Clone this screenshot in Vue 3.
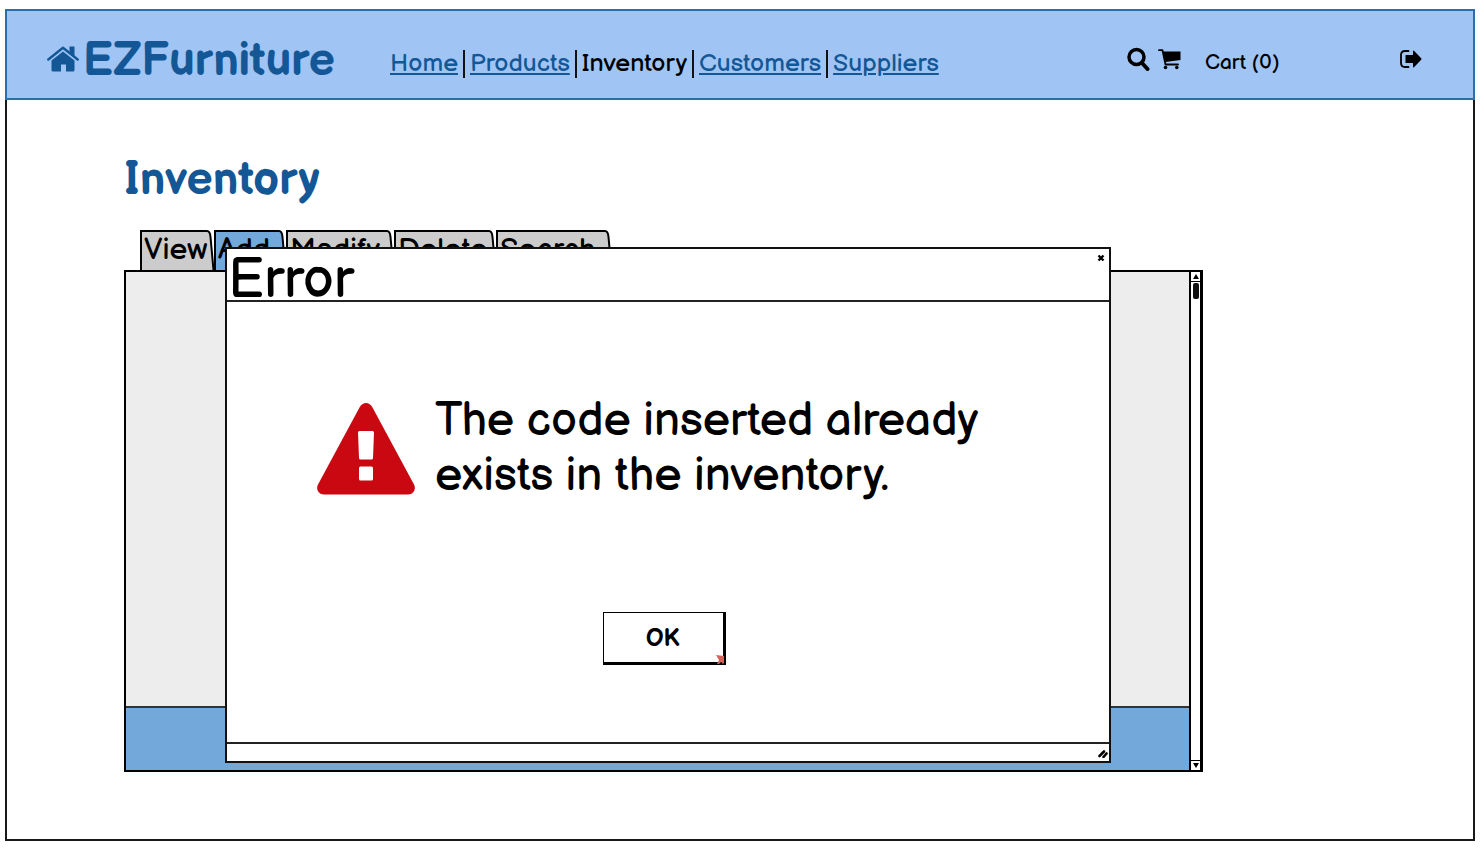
<script setup>
import { ref } from 'vue'

const links = [
  { label: 'Home', href: '#home' },
  { label: 'Products', href: '#products' },
  { label: 'Inventory', current: true },
  { label: 'Customers', href: '#customers' },
  { label: 'Suppliers', href: '#suppliers' },
]
const tabs = ['View', 'Add', 'Modify', 'Delete', 'Search']
const active = ref('Add')
const open = ref(true)
</script>

<template>
  <div class="frame">
    <header class="top">
      <a class="brand" href="#home">
        <svg class="house" viewBox="0 0 32 26" aria-hidden="true">
          <path d="M1.300 13.500 16 1.800l14.700 11.700" fill="none" stroke="currentColor" stroke-width="2.400" stroke-linecap="round" stroke-linejoin="round" />
          <path d="M22.500 0.500h5v10l-5-4z" fill="currentColor" />
          <path d="M16 5.500 27.500 14.500V24q0 1.500-1.500 1.500h-7V18.500h-5v7H6Q4.500 25.500 4.500 24v-9.500z" fill="currentColor" />
        </svg>
        <span>EZFurniture</span>
      </a>
      <nav class="nav" aria-label="Main">
        <template v-for="l in links" :key="l.label">
          <span v-if="l.current" class="item current" aria-current="page">{{ l.label }}</span>
          <a v-else class="item" :href="l.href">{{ l.label }}</a>
        </template>
      </nav>
      <div class="tools">
        <button class="icon" type="button" aria-label="Search">
          <svg width="23" height="24" viewBox="0 0 23 24">
            <circle cx="9.500" cy="10" r="7.500" fill="none" stroke="#000" stroke-width="3.500" />
            <path d="M15 16l5.500 6" stroke="#000" stroke-width="4" stroke-linecap="round" />
          </svg>
        </button>
        <a class="cart" href="#cart">
          <svg width="23" height="21" viewBox="0 0 23 21" aria-hidden="true">
            <path d="M1 1.200h3.500L7.500 15.500H20" fill="none" stroke="#000" stroke-width="1.800" stroke-linecap="round" stroke-linejoin="round" />
            <path d="M5 2.500h17.500v8.500L7.500 13z" fill="#000" />
            <circle cx="7.500" cy="18.500" r="1.800" />
            <circle cx="18.800" cy="18.500" r="1.800" />
          </svg>
          <span>Cart (0)</span>
        </a>
        <button class="icon" type="button" aria-label="Log out">
          <svg width="22" height="18" viewBox="0 0 22 18">
            <path d="M8.500 1H5Q1 1 1 5v8q0 4 4 4h3.500" fill="none" stroke="#000" stroke-width="1.800" stroke-linecap="round" />
            <path d="M6 5h7V1.200q0-1.200 1-.5l7.200 7.500q.8.800 0 1.600L14 17.200q-1 .8-1-.5V13H6q-.5 0-.5-.5v-7Q5.500 5 6 5z" />
          </svg>
        </button>
      </div>
    </header>

    <main class="main">
      <h1>Inventory</h1>
      <div class="tabs" role="tablist">
        <button
          v-for="t in tabs"
          :key="t"
          class="tab"
          :class="{ on: t === active }"
          type="button"
          role="tab"
          :aria-selected="t === active"
          @click="active = t"
        >
          <svg class="cap" width="9" height="40" viewBox="0 0 9 40" aria-hidden="true">
            <path class="fill" d="M0 1h2q3 0 3.500 6L8.500 40H0z" />
            <path d="M0 1h2q3 0 3.500 6L8.500 40" fill="none" stroke="#000" stroke-width="2" />
          </svg>
          <span class="label">{{ t }}</span>
        </button>
      </div>

      <section class="panel">
        <div class="sheet">
          <div class="body"></div>
          <div class="foot"></div>
        </div>
        <div class="scroll">
          <button type="button" aria-label="Scroll up">
            <svg width="6" height="5" viewBox="0 0 6 5"><path d="M3 0l3 5H0z" /></svg>
          </button>
          <div class="thumb"></div>
          <button class="down" type="button" aria-label="Scroll down">
            <svg width="6" height="5" viewBox="0 0 6 5"><path d="M3 5l3-5H0z" /></svg>
          </button>
        </div>

        <div v-if="open" class="dialog" role="alertdialog" aria-labelledby="dlg-title" aria-describedby="dlg-text">
          <div class="titlebar">
            <h2 id="dlg-title">Error</h2>
            <button class="close" type="button" aria-label="Close" @click="open = false">
              <svg width="8" height="8" viewBox="0 0 8 8"><path d="M1.500 1.500l5 5M6.500 1.500l-5 5" stroke="#000" stroke-width="2.400" /></svg>
            </button>
          </div>
          <div class="content">
            <div class="message">
              <svg class="warn" width="98" height="92" viewBox="0 0 98 92" aria-hidden="true">
                <path d="M42.500 4.500Q45 0 49 0t6.500 4.500L97 81.500q2 4-.5 7.500-2 2.500-5.500 2.500H7Q3.500 91.500 1.500 89-1 85.500 1 81.500z" fill="#c90812" />
                <path d="M42.500 28h13q1.500 0 1.500 1.500L56 55q0 1.500-1.500 1.500h-11Q42 56.500 42 55l-1-25.500Q41 28 42.500 28zM43.500 63.500h11q1.500 0 1.500 1.500v11q0 1.500-1.500 1.500h-11Q42 77.500 42 76V65q0-1.500 1.500-1.500z" fill="#fff" />
              </svg>
              <p id="dlg-text">The code inserted already<br />exists in the inventory.</p>
            </div>
            <button class="ok" type="button" @click="open = false">
              OK
              <svg class="mark" width="9" height="9" viewBox="0 0 9 9" aria-hidden="true">
                <path d="M0 0l8 1v7L6.500 9 5.500 6.500 3 9H1l2-4z" fill="#d9605a" />
              </svg>
            </button>
          </div>
          <div class="statusbar">
            <svg width="10" height="9" viewBox="0 0 10 9" aria-hidden="true">
              <path d="M1.500 7l4.500-4.500M5.500 8l3-3.500" stroke="#000" stroke-width="2.600" stroke-linecap="round" />
            </svg>
          </div>
        </div>
      </section>
    </main>
  </div>
</template>

<style>
body {
  margin: 0;
  background: #fff;
}
</style>

<style scoped>
.frame,
.frame * {
  box-sizing: border-box;
}
.frame {
  display: flex;
  flex-direction: column;
  min-height: calc(100vh - 18px);
  margin: 9px 9px 9px 5px;
  border: 2px solid #1a1a1a;
  background: #fff;
  color: #000;
  font-family: "Balsamiq Sans", Inter, "Liberation Sans", sans-serif;
  font-weight: 400;
}
button {
  padding: 0;
  border: 0;
  background: none;
  color: inherit;
  font: inherit;
  cursor: pointer;
}
svg {
  display: block;
}
.top {
  display: flex;
  align-items: center;
  height: 91px;
  margin: -2px -2px 0;
  padding: 9px 51px 0 40px;
  border: 2px solid #2c6dab;
  background: #a0c5f5;
}
.brand {
  display: flex;
  align-items: center;
  gap: 4px;
  width: 343px;
  color: #145796;
  font-size: 46px;
  font-weight: 700;
  line-height: 50px;
  text-decoration: none;
}
.brand span {
  padding-top: 6px;
}
.house {
  width: 32px;
  height: 26px;
}
.nav {
  display: flex;
  padding-top: 10px;
  font-size: 25px;
  line-height: 28px;
}
.item {
  color: #145796;
  text-decoration-thickness: 2px;
  text-underline-offset: 2px;
}
.item + .item {
  margin-left: 5px;
  padding-left: 5px;
  border-left: 2px solid #111;
}
.item.current {
  color: #000;
}
.tools {
  display: flex;
  flex: none;
  align-items: center;
  margin-left: auto;
}
.cart {
  display: flex;
  align-items: center;
  gap: 24px;
  width: 242px;
  margin-left: 8px;
  color: #000;
  font-size: 21px;
  line-height: 28px;
  text-decoration: none;
}
.cart span {
  padding-top: 8px;
}
.main {
  display: flex;
  flex: 1;
  flex-direction: column;
  padding: 54px 270px 67px 117px;
}
h1 {
  margin: 0;
  color: #145796;
  font-size: 46px;
  line-height: 54px;
}
.tabs {
  display: grid;
  grid-template-columns: 74px 72px 108px 102px 116px;
  margin: 22px 0 0 16px;
}
.tab {
  display: flex;
  flex-direction: row-reverse;
  height: 40px;
  font-size: 30px;
  line-height: 36px;
  text-align: left;
}
.label {
  position: relative;
  z-index: 1;
  flex: 1;
  width: 0;
  height: 40px;
  padding-left: 2px;
  border-top: 2px solid #000;
  border-left: 2px solid #000;
  background: #ccc;
}
.cap {
  flex: none;
}
.fill {
  fill: #ccc;
}
.on .label {
  background: #72a8da;
}
.on .fill {
  fill: #72a8da;
}
.panel {
  position: relative;
  z-index: 2;
  display: flex;
  flex: 1;
  min-height: 400px;
  border: 2px solid #000;
  border-right-width: 3px;
}
.sheet {
  display: flex;
  flex: 1;
  flex-direction: column;
}
.body {
  flex: 1;
  background: #ededed;
}
.foot {
  height: 64px;
  border-top: 2px solid #333;
  background: #72a8da;
}
.scroll {
  display: flex;
  flex-direction: column;
  width: 11px;
  border-left: 2px solid #000;
  background: #fff;
}
.scroll button {
  display: flex;
  align-items: center;
  justify-content: center;
  height: 10px;
  border-bottom: 1px solid #000;
}
.scroll .down {
  margin-top: auto;
  border-top: 1px solid #000;
  border-bottom: 0;
}
.thumb {
  width: 6px;
  height: 16px;
  margin: 1px auto 0;
  border-radius: 2px;
  background: #111;
}
.dialog {
  position: absolute;
  top: -25px;
  right: 89px;
  bottom: 7px;
  left: 99px;
  display: flex;
  flex-direction: column;
  border: 2px solid #111;
  background: #fff;
}
.titlebar {
  display: flex;
  align-items: flex-start;
  justify-content: space-between;
  height: 53px;
  padding: 0 3px 0 1px;
  border-bottom: 2px solid #222;
}
h2 {
  margin: 0;
  font-size: 55px;
  font-weight: 400;
  line-height: 64px;
}
.close {
  padding: 5px 1px;
}
.content {
  display: flex;
  flex: 1;
  flex-direction: column;
  align-items: center;
  padding-top: 92px;
}
.message {
  display: flex;
  align-self: flex-start;
  gap: 20px;
  margin-left: 90px;
}
.warn {
  flex: none;
  margin-top: 9px;
}
p {
  margin: 0;
  font-size: 46px;
  line-height: 55px;
  white-space: nowrap;
}
.ok {
  position: relative;
  width: 123px;
  height: 53px;
  margin: 108px 8px 0 0;
  padding-top: 2px;
  border: solid #000;
  border-width: 1px 3px 3px 1px;
  font-size: 24px;
  font-weight: 700;
}
.mark {
  position: absolute;
  right: -2px;
  bottom: -2px;
}
.statusbar {
  display: flex;
  align-items: center;
  justify-content: flex-end;
  height: 19px;
  padding: 2px 1px 0;
  border-top: 2px solid #222;
}
</style>
